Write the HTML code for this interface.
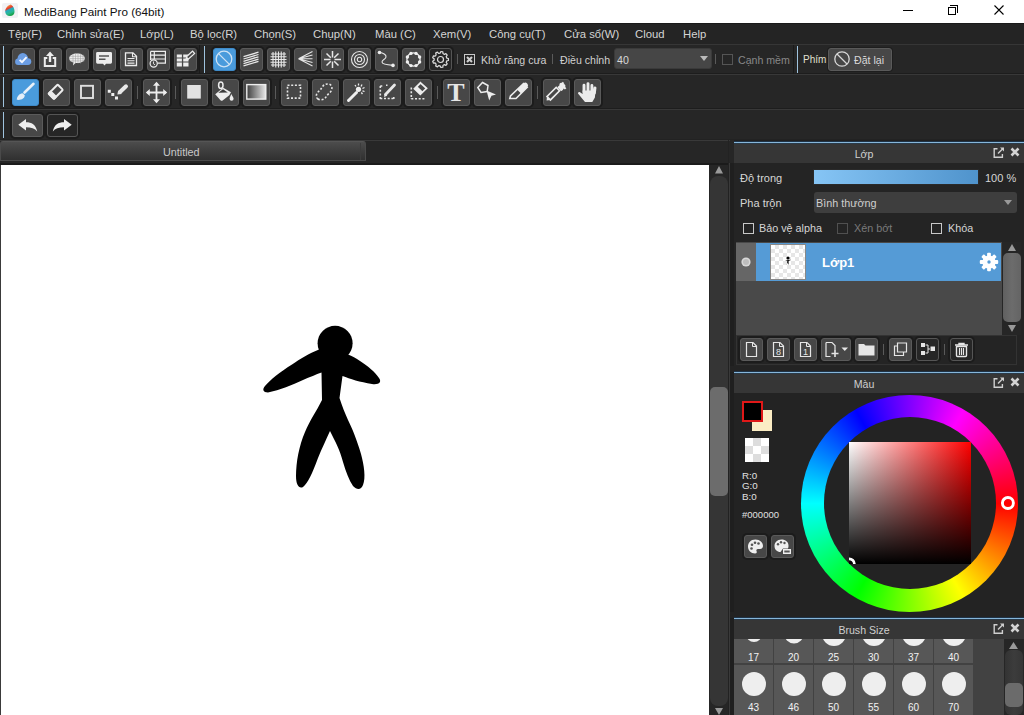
<!DOCTYPE html>
<html><head><meta charset="utf-8"><style>
*{margin:0;padding:0;box-sizing:border-box}
html,body{width:1024px;height:715px;overflow:hidden;background:#232323;font-family:"Liberation Sans",sans-serif;position:relative}
.a{position:absolute}
.t{position:absolute;white-space:nowrap;line-height:1}
.btn{position:absolute;background:#474747;border:1px solid #5a5a5a;border-radius:3px;box-shadow:0 0 0 2px #1c1c1c}
.btn.sel{background:#4a9bdc;border-color:#3f8bc9}
.btn.dk{background:#262626;border:1px solid #555}
.sep{position:absolute;width:1px;background:#5a5a5a}
.hd{position:absolute;width:2px;background:#5f95c0}
svg{position:absolute;overflow:visible}
.mi{position:absolute;white-space:nowrap;line-height:1;color:#d4d4d4;font-size:11.3px;top:28.5px}
.lbl{position:absolute;white-space:nowrap;line-height:1;color:#d0d0d0;font-size:10.6px}
.cb{position:absolute;width:11px;height:11px;border:1px solid #c8c8c8}
</style></head><body>
<div class="a" style="left:0px;top:0px;width:1024px;height:23px;background:#fff"></div>
<div class="a" style="left:2px;top:3px;width:16px;height:15px;background:#f1f1f4;border-radius:2px"></div>
<svg style="left:0;top:0" width="20" height="20" viewBox="0 0 20 20"><defs><linearGradient id="lg1" x1="0.3" y1="0" x2="0.7" y2="1"><stop offset="0" stop-color="#f5b048"/><stop offset="0.3" stop-color="#e8382a"/><stop offset="0.42" stop-color="#26a8c0"/><stop offset="0.7" stop-color="#28b890"/><stop offset="1" stop-color="#109830"/></linearGradient></defs><path d="M10.8 4.6C13.6 6 14.7 9.5 14.5 12C14.3 14.6 12.5 16 10 16C7 16 5.2 14 5.2 11.5C5.2 8.5 7.5 5.5 10.8 4.6Z" fill="url(#lg1)"/></svg>
<div class="t" style="left:24px;top:5.8px;font-size:11.7px;color:#111;">MediBang Paint Pro (64bit)</div>
<div class="a" style="left:903px;top:10px;width:10px;height:1px;background:#000"></div>
<div class="a" style="left:948px;top:7px;width:8px;height:8px;border:1px solid #000"></div>
<div class="a" style="left:950px;top:5px;width:8px;height:8px;border-top:1px solid #000;border-right:1px solid #000"></div>
<svg style="left:994px;top:5px" width="10" height="10"><path d="M0.5 0.5L9.5 9.5M9.5 0.5L0.5 9.5" stroke="#000" stroke-width="1.1"/></svg>
<div class="a" style="left:0px;top:23px;width:1024px;height:21px;background:#242424"></div>
<div class="a" style="left:0px;top:23px;width:1024px;height:1px;background:#1a1a1a"></div>
<div class="mi" style="left:8px">Tệp(F)</div>
<div class="mi" style="left:57px">Chỉnh sửa(E)</div>
<div class="mi" style="left:140px">Lớp(L)</div>
<div class="mi" style="left:190px">Bộ lọc(R)</div>
<div class="mi" style="left:254px">Chọn(S)</div>
<div class="mi" style="left:313px">Chụp(N)</div>
<div class="mi" style="left:375px">Màu (C)</div>
<div class="mi" style="left:433px">Xem(V)</div>
<div class="mi" style="left:489px">Công cụ(T)</div>
<div class="mi" style="left:564px">Cửa sổ(W)</div>
<div class="mi" style="left:635px">Cloud</div>
<div class="mi" style="left:683px">Help</div>
<div class="a" style="left:0px;top:44px;width:1024px;height:96px;background:#262626"></div>
<div class="a" style="left:0px;top:44px;width:1024px;height:1px;background:#363636"></div>
<div class="a" style="left:0px;top:73px;width:1024px;height:1px;background:#1d1d1d"></div>
<div class="a" style="left:0px;top:74px;width:1024px;height:1px;background:#383838"></div>
<div class="a" style="left:0px;top:108px;width:1024px;height:1px;background:#1d1d1d"></div>
<div class="a" style="left:0px;top:109px;width:1024px;height:1px;background:#383838"></div>
<div class="a" style="left:0px;top:139px;width:1024px;height:1px;background:#222"></div>
<div class="a" style="left:3px;top:46px;width:1px;height:27px;background:#9fc3de"></div>
<div class="a" style="left:3px;top:77px;width:1px;height:30px;background:#9fc3de"></div>
<div class="a" style="left:3px;top:112px;width:1px;height:26px;background:#9fc3de"></div>
<div class="a" style="left:204px;top:46px;width:1px;height:27px;background:#9fc3de"></div>
<div class="a" style="left:797px;top:46px;width:1px;height:27px;background:#9fc3de"></div>
<div class="a" style="left:199px;top:45px;width:1px;height:29px;background:#1a1a1a"></div>
<div class="a" style="left:793px;top:45px;width:1px;height:29px;background:#1a1a1a"></div>
<div class="btn " style="left:12px;top:48px;width:23px;height:23px"></div>
<svg style="left:12px;top:48px" width="23" height="23" viewBox="0 0 23 23"><circle cx="6.3" cy="13.8" r="3.2" fill="#6b9de3"/><circle cx="10.8" cy="10.4" r="5.3" fill="#6b9de3"/><circle cx="15.9" cy="13.6" r="3.4" fill="#6b9de3"/><rect x="6.3" y="12" width="9.6" height="5" fill="#6b9de3"/><path d="M7.6 11.8L10 14.2L14.6 9.2" fill="none" stroke="#f4f8ff" stroke-width="1.9" /></svg>
<div class="btn " style="left:39px;top:48px;width:23px;height:23px"></div>
<svg style="left:39px;top:48px" width="23" height="23" viewBox="0 0 23 23"><path d="M8.3 10H5.8V18H16.2V10H13.7" fill="none" stroke="#ededed" stroke-width="2" /><path d="M11 3.5L15 8H12.2V14H9.8V8H7Z" fill="#ededed"/></svg>
<div class="btn " style="left:66px;top:48px;width:23px;height:23px"></div>
<svg style="left:66px;top:48px" width="23" height="23" viewBox="0 0 23 23"><path d="M11 5.5C15.4 5.5 18.8 7.6 18.8 10.3C18.8 13 15.4 15.1 11 15.1C10.4 15.1 9.9 15.1 9.4 15L7 17.6L7.4 14.6C4.8 13.9 3.2 12.3 3.2 10.3C3.2 7.6 6.6 5.5 11 5.5Z" fill="#ededed"/><path d="M7 6V15M9.5 5.5V15.5M12 5.5V15.5M14.5 5.5V15.5M17 6.5V14M3.5 8.3H18.5M3.5 10.6H18.5M3.5 12.9H18.5" fill="none" stroke="#9a9a9a" stroke-width="0.5" /></svg>
<div class="btn " style="left:93px;top:48px;width:23px;height:23px"></div>
<svg style="left:93px;top:48px" width="23" height="23" viewBox="0 0 23 23"><path d="M4.5 3.9H17.6A1.4 1.4 0 0 1 19 5.3V14.3A1.4 1.4 0 0 1 17.6 15.7H13L11.5 17.6L10 15.7H4.5A1.4 1.4 0 0 1 3.1 14.3V5.3A1.4 1.4 0 0 1 4.5 3.9Z" fill="#ededed"/><path d="M6 8H16M6 11.3H12.5" fill="none" stroke="#555" stroke-width="1.4" /></svg>
<div class="btn " style="left:120px;top:48px;width:23px;height:23px"></div>
<svg style="left:120px;top:48px" width="23" height="23" viewBox="0 0 23 23"><path d="M5.5 4.8H13L16.5 8.3V17.5H5.5Z" fill="none" stroke="#ededed" stroke-width="1.3" /><path d="M12.5 4.8V8.8H16.5" fill="none" stroke="#ededed" stroke-width="1.1" /><path d="M7.5 10.5H14.5M7.5 12.8H14.5M7.5 15.1H14.5" fill="none" stroke="#ededed" stroke-width="1.1" /></svg>
<div class="btn " style="left:147px;top:48px;width:23px;height:23px"></div>
<svg style="left:147px;top:48px" width="23" height="23" viewBox="0 0 23 23"><path d="M3.6 3.4H18.4V15.2H10.5M3.6 3.4V12 M3.6 7.1H18.4M3.6 11H18.4M7.3 3.4V11" fill="none" stroke="#ededed" stroke-width="1.2" /><circle cx="6.7" cy="15.5" r="3.6" fill="#4b4b4b" stroke="#ededed" stroke-width="1.2"/><path d="M6.5 13.5V15.8L8 16.8" fill="none" stroke="#ededed" stroke-width="0.9" /></svg>
<div class="btn " style="left:174px;top:48px;width:23px;height:23px"></div>
<svg style="left:174px;top:48px" width="23" height="23" viewBox="0 0 23 23"><path d="M2.8 6.6H7.9V9.6H2.8ZM9.2 6.6H14.5V9.6H9.2ZM2.8 10.6H7.9V13.6H2.8ZM9.2 10.6H14.5V13.6H9.2ZM2.8 14.6H7.9V18.4H2.8ZM9.2 14.6H14.5V18.4H9.2Z" fill="#ededed"/><g transform="rotate(-42 15.5 8)"><rect x="12.5" y="6.5" width="8.5" height="3" fill="#474747" stroke="#ededed" stroke-width="1.2"/><path d="M12.5 6.5L9.5 8L12.5 9.5Z" fill="#ededed"/></g></svg>
<div class="btn sel" style="left:213px;top:48px;width:23px;height:23px"></div>
<svg style="left:213px;top:48px" width="23" height="23" viewBox="0 0 23 23"><circle cx="11" cy="11" r="7.8" fill="none" stroke="#cfe3f5" stroke-width="1.3"/><path d="M5.6 5.6L16.4 16.4" fill="none" stroke="#cfe3f5" stroke-width="1.3" /></svg>
<div class="btn " style="left:240px;top:48px;width:23px;height:23px"></div>
<svg style="left:240px;top:48px" width="23" height="23" viewBox="0 0 23 23"><path d="M3.5 8.7L18.5 4.2M3.5 11L18.5 6.5M3.5 13.3L18.5 8.8M3.5 15.6L18.5 11.1M3.5 17.9L18.5 13.4" fill="none" stroke="#e6e6e6" stroke-width="1.3" /></svg>
<div class="btn " style="left:267px;top:48px;width:23px;height:23px"></div>
<svg style="left:267px;top:48px" width="23" height="23" viewBox="0 0 23 23"><path d="M6 4V19M8.75 3.5V19.5M11.5 3.5V19.5M14.25 3.5V19.5M17 4V19M4 6H19M3.5 8.75H19.5M3.5 11.5H19.5M3.5 14.25H19.5M4 17H19" fill="none" stroke="#e8e8e8" stroke-width="1.1" /></svg>
<div class="btn " style="left:294px;top:48px;width:23px;height:23px"></div>
<svg style="left:294px;top:48px" width="23" height="23" viewBox="0 0 23 23"><path d="M4.5 10.8L18.5 3.5M4.5 10.8L18.5 7M4.5 10.8L18.5 10.8M4.5 10.8L18.5 14.5M4.5 10.8L18.5 18" fill="none" stroke="#e6e6e6" stroke-width="1.1" /></svg>
<div class="btn " style="left:321px;top:48px;width:23px;height:23px"></div>
<svg style="left:321px;top:48px" width="23" height="23" viewBox="0 0 23 23"><path d="M11.5 3V9.5M11.5 13.5V20M3 11.5H9.5M13.5 11.5H20M5.5 5.5L9.8 9.8M13.2 13.2L17.5 17.5M17.5 5.5L13.2 9.8M9.8 13.2L5.5 17.5" fill="none" stroke="#e6e6e6" stroke-width="1.5" /></svg>
<div class="btn " style="left:348px;top:48px;width:23px;height:23px"></div>
<svg style="left:348px;top:48px" width="23" height="23" viewBox="0 0 23 23"><circle cx="11.5" cy="11.5" r="8" fill="none" stroke="#e6e6e6" stroke-width="1.1"/><circle cx="11.5" cy="11.5" r="5" fill="none" stroke="#e6e6e6" stroke-width="1.1"/><circle cx="11.5" cy="11.5" r="2.2" fill="none" stroke="#e6e6e6" stroke-width="1.1"/></svg>
<div class="btn " style="left:375px;top:48px;width:23px;height:23px"></div>
<svg style="left:375px;top:48px" width="23" height="23" viewBox="0 0 23 23"><path d="M4.5 4.5C8 5 11.5 6.5 11 9C10.5 11.5 7 11.5 7 14C7 16.5 13 17 18 17.4" fill="none" stroke="#e6e6e6" stroke-width="1.1" /><circle cx="4.5" cy="4.5" r="1.8" fill="#eee"/><circle cx="18" cy="17.4" r="1.8" fill="#eee"/></svg>
<div class="btn " style="left:402px;top:48px;width:23px;height:23px"></div>
<svg style="left:402px;top:48px" width="23" height="23" viewBox="0 0 23 23"><circle cx="11.5" cy="11.5" r="6.6" fill="none" stroke="#e6e6e6" stroke-width="1.3"/><circle cx="17.60" cy="14.01" r="1.7" fill="#f0f0f0"/><circle cx="14.04" cy="17.59" r="1.7" fill="#f0f0f0"/><circle cx="8.99" cy="17.60" r="1.7" fill="#f0f0f0"/><circle cx="5.41" cy="14.04" r="1.7" fill="#f0f0f0"/><circle cx="5.40" cy="8.99" r="1.7" fill="#f0f0f0"/><circle cx="8.96" cy="5.41" r="1.7" fill="#f0f0f0"/><circle cx="14.01" cy="5.40" r="1.7" fill="#f0f0f0"/><circle cx="17.59" cy="8.96" r="1.7" fill="#f0f0f0"/></svg>
<div class="btn dk" style="left:429px;top:48px;width:23px;height:23px"></div>
<svg style="left:429px;top:48px" width="23" height="23" viewBox="0 0 23 23"><path d="M19.44 10.50 L19.44 12.50 L17.74 12.92 L17.19 14.43 L18.22 15.83 L16.94 17.37 L15.37 16.60 L13.98 17.40 L13.87 19.14 L11.89 19.49 L11.19 17.89 L9.61 17.61 L8.40 18.87 L6.66 17.87 L7.15 16.20 L6.12 14.97 L4.38 15.16 L3.70 13.27 L5.15 12.30 L5.15 10.70 L3.70 9.73 L4.38 7.84 L6.12 8.03 L7.15 6.80 L6.66 5.13 L8.40 4.13 L9.61 5.39 L11.19 5.11 L11.89 3.51 L13.87 3.86 L13.98 5.60 L15.37 6.40 L16.94 5.63 L18.22 7.17 L17.19 8.57 L17.74 10.08Z" fill="none" stroke="#dcdcdc" stroke-width="1.2" stroke-linejoin="round"/><circle cx="11.5" cy="11.5" r="3" fill="none" stroke="#dcdcdc" stroke-width="1.2"/></svg>
<div class="sep" style="left:457px;top:54px;height:10px"></div>
<div class="cb" style="left:464px;top:54px"></div>
<svg style="left:464px;top:54px" width="11" height="11"><path d="M3 3L8 8M8 3L3 8" stroke="#cfcfcf" stroke-width="2.1"/></svg>
<div class="t" style="left:481px;top:55px;font-size:10.6px;color:#d0d0d0;">Khử răng cưa</div>
<div class="sep" style="left:552px;top:54px;height:10px"></div>
<div class="t" style="left:560px;top:55px;font-size:10.6px;color:#d0d0d0;">Điều chỉnh</div>
<div class="a" style="left:614px;top:48px;width:98px;height:21px;background:#464646;border-radius:3px;border:1px solid #3a3a3a"></div>
<div class="t" style="left:617px;top:55px;font-size:10.6px;color:#d8d8d8;">40</div>
<svg style="left:700px;top:56px" width="8" height="5"><path d="M0 0H8L4 5Z" fill="#bbb"/></svg>
<div class="sep" style="left:715px;top:54px;height:10px"></div>
<div class="cb" style="left:722px;top:54px;border-color:#555"></div>
<div class="t" style="left:738px;top:55px;font-size:10.6px;color:#888;">Cạnh mềm</div>
<div class="t" style="left:803px;top:55px;font-size:10px;color:#e0e0d0;">Phím</div>
<div class="a" style="left:828px;top:48px;width:64px;height:23px;background:#474747;border-radius:3px;border:1px solid #5a5a5a;box-shadow:0 0 0 1px #1e1e1e"></div>
<svg style="left:834px;top:51px" width="16" height="16"><circle cx="8" cy="8" r="7.2" fill="none" stroke="#d8d8d8" stroke-width="1.3"/><path d="M3 3L13 13" stroke="#d8d8d8" stroke-width="1.3"/></svg>
<div class="t" style="left:854px;top:55px;font-size:10.6px;color:#d8d8d8;">Đặt lại</div>
<div class="btn sel" style="left:12px;top:79px;width:27px;height:27px"></div>
<svg style="left:12px;top:79px" width="27" height="27" viewBox="0 0 27 27"><path d="M12.5 13.5L21.5 4.8" fill="none" stroke="#eaf2fa" stroke-width="2.6" stroke-linecap="round"/><path d="M4.8 20.8C4.6 17.5 7.5 14.5 10.5 14.2L12.8 16.3C12.6 19.5 9.5 21.3 4.8 20.8Z" fill="#e4eef8"/></svg>
<div class="btn " style="left:43px;top:79px;width:27px;height:27px"></div>
<svg style="left:43px;top:79px" width="27" height="27" viewBox="0 0 27 27"><g transform="rotate(-45 12.8 12.7)"><rect x="6.4" y="8.95" width="12.8" height="7.5" rx="1" fill="none" stroke="#ececec" stroke-width="2"/><rect x="5.4" y="7.95" width="5" height="9.5" rx="1.2" fill="#ececec"/></g></svg>
<div class="btn " style="left:74px;top:79px;width:27px;height:27px"></div>
<svg style="left:74px;top:79px" width="27" height="27" viewBox="0 0 27 27"><rect x="7" y="6.8" width="12" height="12.2" fill="none" stroke="#e0e0e0" stroke-width="1.9"/></svg>
<div class="btn " style="left:105px;top:79px;width:27px;height:27px"></div>
<svg style="left:105px;top:79px" width="27" height="27" viewBox="0 0 27 27"><path d="M2.8 10.8H5.8V13.8H2.8ZM6.3 14.1H9.3V17.1H6.3ZM10 17.5H13V20.5H10Z" fill="#f0f0f0"/><path d="M15 13L21 7.3" fill="none" stroke="#e8e8e8" stroke-width="4" stroke-linecap="round"/><path d="M12.3 15.5L13.2 11.5L16.8 15Z" fill="#e8e8e8"/></svg>
<div class="btn " style="left:143px;top:79px;width:27px;height:27px"></div>
<svg style="left:143px;top:79px" width="27" height="27" viewBox="0 0 27 27"><path d="M13.5 4V23M4 13.5H23" fill="none" stroke="#ededed" stroke-width="1.8" /><path d="M13.5 2.8L17 6.8H10ZM13.5 24.2L17 20.2H10ZM2.8 13.5L6.8 10V17ZM24.2 13.5L20.2 10V17Z" fill="#ededed"/></svg>
<div class="btn " style="left:181px;top:79px;width:27px;height:27px"></div>
<svg style="left:181px;top:79px" width="27" height="27" viewBox="0 0 27 27"><rect x="6.2" y="6" width="13.6" height="13.6" fill="#e2e2e2"/></svg>
<div class="btn " style="left:212px;top:79px;width:27px;height:27px"></div>
<svg style="left:212px;top:79px" width="27" height="27" viewBox="0 0 27 27"><ellipse cx="8.8" cy="6.3" rx="2.2" ry="3.2" fill="none" stroke="#ececec" stroke-width="1.5"/><path d="M3.2 15.3L11.2 8.8L19 13.2L17.3 16.2L10.6 21.6C9.8 22 9 21.8 8.5 21.2Z" fill="#ededed"/><path d="M6.3 13.8L11 10.3L15.8 13.5Z" fill="#3a3a3a"/><path d="M19.3 15C20.3 17 21.6 18.5 21.6 19.8A2 2 0 0 1 17.6 19.8C17.6 18.5 18.5 17 19.3 15Z" fill="#ededed"/></svg>
<div class="btn " style="left:243px;top:79px;width:27px;height:27px"></div>
<svg style="left:243px;top:79px" width="27" height="27" viewBox="0 0 27 27"><defs><linearGradient id="gr1"><stop offset="0" stop-color="#3e3e3e"/><stop offset="1" stop-color="#e8e8e8"/></linearGradient></defs><rect x="3.8" y="5.6" width="19" height="14.5" fill="url(#gr1)" stroke="#eee" stroke-width="1.4"/></svg>
<div class="btn " style="left:281px;top:79px;width:27px;height:27px"></div>
<svg style="left:281px;top:79px" width="27" height="27" viewBox="0 0 27 27"><rect x="6.5" y="6.3" width="13" height="12.8" fill="none" stroke="#e6e6e6" stroke-width="1.6" stroke-dasharray="2 1.7"/></svg>
<div class="btn " style="left:312px;top:79px;width:27px;height:27px"></div>
<svg style="left:312px;top:79px" width="27" height="27" viewBox="0 0 27 27"><path d="M6 20C3.5 18.5 4 14.5 6.5 12.5C8.5 11 9.5 9 11 7C13 4.5 17.5 4.2 19.2 6.5C20.8 8.8 19.5 12.5 17 14.5C14.5 16.5 14 19 11.5 20.2C9.5 21 7.5 21 6 20Z" fill="none" stroke="#e6e6e6" stroke-width="1.6" stroke-dasharray="2 1.8"/></svg>
<div class="btn " style="left:343px;top:79px;width:27px;height:27px"></div>
<svg style="left:343px;top:79px" width="27" height="27" viewBox="0 0 27 27"><path d="M5.5 21.5L13.5 13.5" fill="none" stroke="#eee" stroke-width="3" stroke-linecap="round"/><circle cx="15.5" cy="10.3" r="2.6" fill="#eee"/><path d="M15.5 4.5V6.5M19 5.5L18 7.5M21.5 8.5L19.5 9.5M21.5 12.5L19.5 11.8M12 6L13 7.5M19.5 15L18.3 13.5" fill="none" stroke="#ededed" stroke-width="1.3" /></svg>
<div class="btn " style="left:374px;top:79px;width:27px;height:27px"></div>
<svg style="left:374px;top:79px" width="27" height="27" viewBox="0 0 27 27"><path d="M6.3 7H9.5M12 6.3H13.5M6.3 7V20M6.3 19.5H20M19.8 20V17" fill="none" stroke="#e6e6e6" stroke-width="1.6" stroke-dasharray="2 1.7"/><path d="M11.5 15.5L20.5 6" fill="none" stroke="#e8e8e8" stroke-width="2.8" stroke-linecap="round"/><path d="M10 18L10.8 14.6L13.3 16.8Z" fill="#ededed"/></svg>
<div class="btn " style="left:405px;top:79px;width:27px;height:27px"></div>
<svg style="left:405px;top:79px" width="27" height="27" viewBox="0 0 27 27"><path d="M6.3 8.5V20M6.3 19.8H20.5" fill="none" stroke="#e6e6e6" stroke-width="1.6" stroke-dasharray="2 1.7"/><path d="M15.5 3.8L21.5 9.3L15.3 15.3L9.5 9.8Z" fill="none" stroke="#ededed" stroke-width="1.8" /><path d="M9.5 9.8L12.2 7.2L18 12.8L15.3 15.3Z" fill="#ededed"/></svg>
<div class="btn " style="left:443px;top:79px;width:27px;height:27px"></div>
<svg style="left:443px;top:79px" width="27" height="27" viewBox="0 0 27 27"><text x="13" y="21.8" text-anchor="middle" font-family="Liberation Serif" font-weight="bold" font-size="26" fill="#e6e6e6">T</text></svg>
<div class="btn " style="left:474px;top:79px;width:27px;height:27px"></div>
<svg style="left:474px;top:79px" width="27" height="27" viewBox="0 0 27 27"><path d="M8.5 3.5L14 6.5L13.2 12.5L7 13.5L3.8 8.5Z" fill="none" stroke="#ededed" stroke-width="1.5" /><path d="M12.5 11.5L22 15.5L17.5 16.8L15.2 21.5Z" fill="#ededed"/></svg>
<div class="btn " style="left:505px;top:79px;width:27px;height:27px"></div>
<svg style="left:505px;top:79px" width="27" height="27" viewBox="0 0 27 27"><path d="M18.5 4.5L22.2 8.2L11 19.5H4.8L5.5 17Z" fill="none" stroke="#ededed" stroke-width="1.6" /><path d="M18.5 4.5A2.6 2.6 0 0 1 22.2 8.2L16 14.5L12.3 10.8Z" fill="#ededed"/></svg>
<div class="btn " style="left:543px;top:79px;width:27px;height:27px"></div>
<svg style="left:543px;top:79px" width="27" height="27" viewBox="0 0 27 27"><g transform="rotate(-45 11 14)"><rect x="3.5" y="11.6" width="13" height="4.8" fill="none" stroke="#ececec" stroke-width="1.6"/><path d="M3.5 11.6L0.5 14L3.5 16.4Z" fill="#ececec"/></g><path d="M14.3 8.3L16.5 6.3C16 4.8 17.3 3.3 18.8 3.8L19.8 2.8L21.3 4.3L20.5 5.1C22 5.3 23 6.6 22.2 8L23.4 9.2L21.9 10.6L20.6 9.6C20.3 11 19 12.5 17.7 11.7Z" fill="#ededed"/></svg>
<div class="btn " style="left:574px;top:79px;width:27px;height:27px"></div>
<svg style="left:574px;top:79px" width="27" height="27" viewBox="0 0 27 27"><path d="M10 6.3V13M14 4.6V13M17.9 6.4V13M21 8.9L20.4 14" fill="none" stroke="#ececec" stroke-width="2.9" stroke-linecap="round"/><path d="M8.6 11.5H21.5L20.9 18.5L18.3 23H11L8.5 20L4.2 14.8C3.5 13.8 4.8 12.6 6 13.2L8.6 15Z" fill="#ececec"/></svg>
<div class="sep" style="left:137px;top:86px;height:13px"></div>
<div class="sep" style="left:175px;top:86px;height:13px"></div>
<div class="sep" style="left:275px;top:86px;height:13px"></div>
<div class="sep" style="left:437px;top:86px;height:13px"></div>
<div class="sep" style="left:537px;top:86px;height:13px"></div>
<div class="btn " style="left:12px;top:114px;width:31px;height:23px"></div>
<svg style="left:12px;top:114px" width="31" height="23" viewBox="0 0 31 23"><path d="M6.3 10.8L14 5V8.2C19.5 8.2 24 10.5 25.2 17.5C23 14.5 19 13.2 14 13.2V16.5Z" fill="#eeeeee"/></svg>
<div class="btn dk" style="left:47px;top:114px;width:31px;height:23px"></div>
<svg style="left:47px;top:114px" width="31" height="23" viewBox="0 0 31 23"><path d="M24.7 10.8L17 5V8.2C11.5 8.2 7 10.5 5.8 17.5C8 14.5 12 13.2 17 13.2V16.5Z" fill="#eeeeee"/></svg>
<div class="a" style="left:0px;top:140px;width:730px;height:25px;background:#262626"></div>
<div class="a" style="left:0px;top:140px;width:730px;height:1px;background:#393939"></div>
<div class="a" style="left:0px;top:141px;width:366px;height:20px;background:linear-gradient(#4c4c4c,#303030);border:1px solid #4a4a4a;border-top-color:#555;border-radius:3px 3px 0 0"></div>
<div class="a" style="left:360px;top:143px;width:1px;height:17px;background:#3c3c3c"></div>
<div class="t" style="left:163px;top:147px;font-size:10.8px;color:#c8c8c8;">Untitled</div>
<div class="a" style="left:0px;top:163px;width:730px;height:2px;background:#1b1b1b"></div>
<div class="a" style="left:0px;top:165px;width:709px;height:550px;background:#3a3a3a"></div>
<div class="a" style="left:1px;top:165px;width:708px;height:550px;background:#fff"></div>
<svg style="left:0;top:0" width="709" height="715" viewBox="0 0 709 715">
<circle cx="335.1" cy="343.3" r="17.5" fill="#000"/>
<path d="M319 349.5 C310 353 300 359 292 364.5 C280 372 270 380 265 386 C262 389.5 263 392.5 268 392.5 C280 390 292 385 303 380 C310 377 316 374.5 321.5 372.5 L322 400
C316 412 310 420 305 432 C299 446 296 462 296 476 C296 485 299 489 303 487 C308 483 312 474 318 458 C322 448 326 440 330 431
C335 441 340 450 343 462 C346 472 349 480 353 486 C357 490 361 490 363 485 C366 478 364 465 361 454 C357 440 352 428 348 420 C345 413 342 406 339.5 398
L342.5 376 C350 379 360 382 372 384 C379 385 382 382 379 378 C375 372 368 366 360 361 C356 358 352 356 348 354.5 Z" fill="#000"/>
</svg>
<div class="a" style="left:709px;top:165px;width:21px;height:550px;background:#262626"></div>
<svg style="left:715px;top:166px" width="8" height="8"><path d="M4 0L8 7.5H0Z" fill="#9a9a9a"/></svg>
<div class="a" style="left:710px;top:176px;width:18px;height:530px;background:#353535;border-radius:8px"></div>
<div class="a" style="left:710px;top:387px;width:18px;height:109px;background:#6c6c6c;border-radius:5px"></div>
<svg style="left:715px;top:708px" width="8" height="8"><path d="M4 7L8 0H0Z" fill="#9a9a9a"/></svg>
<div class="a" style="left:728px;top:140px;width:1px;height:575px;background:#222"></div>
<div class="a" style="left:729px;top:163px;width:1px;height:552px;background:#3a3a3a"></div>
<div class="a" style="left:730px;top:140px;width:294px;height:575px;background:#1f1f1f"></div>
<div class="a" style="left:730px;top:140px;width:4px;height:23px;background:#262626"></div>
<div class="a" style="left:734px;top:141px;width:290px;height:1px;background:#1f3347"></div>
<div class="a" style="left:734px;top:142px;width:290px;height:1px;background:#86b6da"></div>
<div class="a" style="left:734px;top:143px;width:290px;height:1px;background:#2a3a48"></div>
<div class="a" style="left:734px;top:144px;width:290px;height:19px;background:#363636"></div>
<div class="t" style="left:764px;width:200px;text-align:center;top:149px;font-size:10.6px;color:#cfcfcf">Lớp</div>
<svg style="left:993px;top:147px" width="12" height="12"><path d="M4.5 1.8H1.2V10.2H9.4V7" fill="none" stroke="#cfcfcf" stroke-width="1.4"/><path d="M7 0.5H11V4.5Z" fill="#cfcfcf"/><path d="M10 1.5L5 6.5" stroke="#cfcfcf" stroke-width="1.4"/></svg>
<svg style="left:1010px;top:147px" width="10" height="10"><path d="M1.5 1.5L8.5 8.5M8.5 1.5L1.5 8.5" stroke="#d4d4d4" stroke-width="2.6"/></svg>
<div class="a" style="left:734px;top:163px;width:290px;height:209px;background:#242424"></div>
<div class="t" style="left:740px;top:173px;font-size:11px;color:#d6d6d6;">Độ trong</div>
<div class="a" style="left:813px;top:169px;width:166px;height:16px;background:linear-gradient(90deg,#86c5f5,#4f93cc);border:1px solid #2a2a2a"></div>
<div class="t" style="left:985px;top:173px;font-size:11px;color:#d6d6d6;">100 %</div>
<div class="t" style="left:740px;top:198px;font-size:11px;color:#d6d6d6;">Pha trộn</div>
<div class="a" style="left:814px;top:192px;width:203px;height:21px;background:#3e3e3e;border-radius:3px"></div>
<div class="t" style="left:816px;top:198px;font-size:10.8px;color:#cfcfcf;">Bình thường</div>
<svg style="left:1004px;top:200px" width="8" height="5"><path d="M0 0H8L4 5Z" fill="#999"/></svg>
<div class="cb" style="left:743px;top:223px"></div>
<div class="t" style="left:759px;top:223px;font-size:10.8px;color:#d6d6d6;">Bảo vệ alpha</div>
<div class="cb" style="left:837px;top:223px;border-color:#505050"></div>
<div class="t" style="left:854px;top:223px;font-size:10.8px;color:#7a7a7a;">Xén bớt</div>
<div class="cb" style="left:931px;top:223px"></div>
<div class="t" style="left:948px;top:223px;font-size:10.8px;color:#d6d6d6;">Khóa</div>
<div class="a" style="left:736px;top:242px;width:266px;height:93px;background:#494949"></div>
<div class="a" style="left:736px;top:243px;width:20px;height:38px;background:#666"></div>
<svg style="left:740px;top:256px" width="12" height="12"><circle cx="6" cy="6" r="4.6" fill="#d8d8d8"/><circle cx="6" cy="6" r="3" fill="#bdbdbd"/></svg>
<div class="a" style="left:756px;top:243px;width:245px;height:38px;background:#559bd6"></div>
<div class="a" style="left:770px;top:244px;width:36px;height:36px;background-color:#fff;background-image:linear-gradient(45deg,#e6e6e6 25%,transparent 25%,transparent 75%,#e6e6e6 75%),linear-gradient(45deg,#e6e6e6 25%,transparent 25%,transparent 75%,#e6e6e6 75%);background-size:8px 8px;background-position:0 0,4px 4px;border:1px solid #888"></div>
<svg style="left:784px;top:256px" width="8" height="10"><circle cx="4" cy="2" r="1.6" fill="#000"/><path d="M1 4.5L7 3.8L4.6 5V9L3.5 6.5L2.8 9L3.3 5Z" fill="#000"/></svg>
<div class="t" style="left:822px;top:256px;font-size:13px;color:#fff;font-weight:bold">Lớp1</div>
<svg style="left:979px;top:252px" width="20" height="20"><circle cx="10" cy="10" r="6.6" fill="#fff"/><rect x="8.1" y="0.8" width="3.8" height="5" rx="1" fill="#fff" transform="rotate(0 10 10)"/><rect x="8.1" y="0.8" width="3.8" height="5" rx="1" fill="#fff" transform="rotate(45 10 10)"/><rect x="8.1" y="0.8" width="3.8" height="5" rx="1" fill="#fff" transform="rotate(90 10 10)"/><rect x="8.1" y="0.8" width="3.8" height="5" rx="1" fill="#fff" transform="rotate(135 10 10)"/><rect x="8.1" y="0.8" width="3.8" height="5" rx="1" fill="#fff" transform="rotate(180 10 10)"/><rect x="8.1" y="0.8" width="3.8" height="5" rx="1" fill="#fff" transform="rotate(225 10 10)"/><rect x="8.1" y="0.8" width="3.8" height="5" rx="1" fill="#fff" transform="rotate(270 10 10)"/><rect x="8.1" y="0.8" width="3.8" height="5" rx="1" fill="#fff" transform="rotate(315 10 10)"/><circle cx="10" cy="10" r="1.7" fill="#559bd6"/></svg>
<div class="a" style="left:1002px;top:242px;width:19px;height:93px;background:#262626"></div>
<svg style="left:1008px;top:244px" width="8" height="7"><path d="M4 0L8 7H0Z" fill="#999"/></svg>
<div class="a" style="left:1003px;top:253px;width:18px;height:69px;background:linear-gradient(90deg,#606060,#6c6c6c 50%,#646464);border-radius:5px"></div>
<svg style="left:1008px;top:325px" width="8" height="7"><path d="M4 7L8 0H0Z" fill="#999"/></svg>
<div class="a" style="left:736px;top:335px;width:281px;height:30px;border:1px solid #333"></div>
<div class="btn " style="left:740px;top:338px;width:23px;height:23px"></div>
<svg style="left:740px;top:338px" width="23" height="23"><path d="M6.5 4.5H13L16.5 8V18.5H6.5Z" fill="none" stroke="#e6e6e6" stroke-width="1.2"/><path d="M12.5 4.5V8.5H16.5" fill="none" stroke="#e6e6e6" stroke-width="1"/></svg>
<div class="btn " style="left:767px;top:338px;width:23px;height:23px"></div>
<svg style="left:767px;top:338px" width="23" height="23"><path d="M6.5 4.5H13L16.5 8V18.5H6.5Z" fill="none" stroke="#e6e6e6" stroke-width="1.2"/><path d="M12.5 4.5V8.5H16.5" fill="none" stroke="#e6e6e6" stroke-width="1"/><text x="11.5" y="16.5" text-anchor="middle" font-size="9" font-family="Liberation Sans" fill="#e6e6e6">8</text></svg>
<div class="btn " style="left:794px;top:338px;width:23px;height:23px"></div>
<svg style="left:794px;top:338px" width="23" height="23"><path d="M6.5 4.5H13L16.5 8V18.5H6.5Z" fill="none" stroke="#e6e6e6" stroke-width="1.2"/><path d="M12.5 4.5V8.5H16.5" fill="none" stroke="#e6e6e6" stroke-width="1"/><text x="11.5" y="16.5" text-anchor="middle" font-size="9" font-family="Liberation Sans" fill="#e6e6e6">1</text></svg>
<div class="btn " style="left:821px;top:338px;width:30px;height:23px"></div>
<svg style="left:821px;top:338px" width="30" height="23"><path d="M5 4.5H11L14 7.5V12M9.5 18.5H5V4.5" fill="none" stroke="#e6e6e6" stroke-width="1.2"/><path d="M14 12V19M10.5 15.5H17.5" fill="none" stroke="#e6e6e6" stroke-width="1.6"/><path d="M20.5 9.5H27L23.75 13Z" fill="#e6e6e6"/></svg>
<div class="btn " style="left:855px;top:338px;width:23px;height:23px"></div>
<svg style="left:855px;top:338px" width="23" height="23"><path d="M3.5 6H9L10.5 7.5H19.5V17.5H3.5Z" fill="#e6e6e6"/></svg>
<div class="sep" style="left:883px;top:344px;height:11px"></div>
<div class="btn " style="left:889px;top:338px;width:23px;height:23px"></div>
<svg style="left:889px;top:338px" width="23" height="23"><path d="M8.5 5H17.5V14H8.5Z" fill="none" stroke="#e6e6e6" stroke-width="1.2"/><path d="M8.5 8H5.5V17.5H14.5V14" fill="none" stroke="#e6e6e6" stroke-width="1.2"/></svg>
<div class="btn dk" style="left:916px;top:338px;width:23px;height:23px"></div>
<svg style="left:916px;top:338px" width="23" height="23"><path d="M5 5H9V9H5ZM5 13H9V17H5ZM14.5 8.5H19V13H14.5Z" fill="#e6e6e6"/><path d="M9.5 7H12V15H9.5M12 11H14" fill="none" stroke="#e6e6e6" stroke-width="1"/></svg>
<div class="sep" style="left:944px;top:344px;height:11px"></div>
<div class="btn dk" style="left:950px;top:338px;width:23px;height:23px"></div>
<svg style="left:950px;top:338px" width="23" height="23"><path d="M5 7H18M9 7V5.5H14V7" fill="none" stroke="#e6e6e6" stroke-width="1.4"/><path d="M6.5 8.5H16.5V17.5A1 1 0 0 1 15.5 18.5H7.5A1 1 0 0 1 6.5 17.5Z" fill="none" stroke="#e6e6e6" stroke-width="1.4"/><path d="M9.5 10V17M11.5 10V17M13.5 10V17" fill="none" stroke="#e6e6e6" stroke-width="1.2"/></svg>
<div class="a" style="left:730px;top:366px;width:294px;height:6px;background:#232323"></div>
<div class="a" style="left:734px;top:371px;width:290px;height:1px;background:#1f3347"></div>
<div class="a" style="left:734px;top:372px;width:290px;height:1px;background:#86b6da"></div>
<div class="a" style="left:734px;top:373px;width:290px;height:1px;background:#2a3a48"></div>
<div class="a" style="left:734px;top:374px;width:290px;height:19px;background:#363636"></div>
<div class="t" style="left:764px;width:200px;text-align:center;top:379px;font-size:10.6px;color:#cfcfcf">Màu</div>
<svg style="left:993px;top:377px" width="12" height="12"><path d="M4.5 1.8H1.2V10.2H9.4V7" fill="none" stroke="#cfcfcf" stroke-width="1.4"/><path d="M7 0.5H11V4.5Z" fill="#cfcfcf"/><path d="M10 1.5L5 6.5" stroke="#cfcfcf" stroke-width="1.4"/></svg>
<svg style="left:1010px;top:377px" width="10" height="10"><path d="M1.5 1.5L8.5 8.5M8.5 1.5L1.5 8.5" stroke="#d4d4d4" stroke-width="2.6"/></svg>
<div class="a" style="left:734px;top:393px;width:290px;height:225px;background:#232323"></div>
<div class="a" style="left:752px;top:410px;width:20px;height:21px;background:#fbedc4"></div>
<div class="a" style="left:742px;top:401px;width:21px;height:21px;background:#000;border:2px solid #e01818"></div>
<div class="a" style="left:745px;top:438px;width:24px;height:24px;background-color:#fff;background-image:linear-gradient(45deg,#ddd 25%,transparent 25%,transparent 75%,#ddd 75%),linear-gradient(45deg,#ddd 25%,transparent 25%,transparent 75%,#ddd 75%);background-size:16px 16px;background-position:0 0,8px 8px"></div>
<div class="t" style="left:742px;top:470.5px;font-size:9.8px;color:#e0e0e0;">R:0</div>
<div class="t" style="left:742px;top:481.25px;font-size:9.8px;color:#e0e0e0;">G:0</div>
<div class="t" style="left:742px;top:492.0px;font-size:9.8px;color:#e0e0e0;">B:0</div>
<div class="t" style="left:742px;top:510px;font-size:9.5px;color:#e0e0e0;">#000000</div>
<div class="btn" style="left:744px;top:535px;width:23px;height:23px"></div>
<div class="btn" style="left:771px;top:535px;width:23px;height:23px"></div>
<svg style="left:744px;top:535px" width="23" height="23"><path d="M11.5 4.5C6.5 4.5 4 8 4 11.5C4 15.5 7 18.5 11 18.5C13 18.5 13 17 12.5 16C12 15 12.5 14 14 14H16C18 14 19 12.5 19 11C19 7.5 16 4.5 11.5 4.5Z" fill="#eee"/><circle cx="8" cy="9.8" r="1.3" fill="#555"/><circle cx="11" cy="7.8" r="1.3" fill="#555"/><circle cx="14.5" cy="8.5" r="1.3" fill="#555"/><circle cx="7.5" cy="13.5" r="1.3" fill="#555"/></svg>
<svg style="left:771px;top:535px" width="23" height="23"><path d="M10.5 4.5C6 4.5 3.5 7.5 3.5 11C3.5 14.5 6 17 9.5 17L12 13.5H17C17.5 12.5 17.5 11.5 17.5 10.5C17.5 7 14.5 4.5 10.5 4.5Z" fill="#eee"/><circle cx="7" cy="9.3" r="1.2" fill="#555"/><circle cx="10" cy="7.3" r="1.2" fill="#555"/><circle cx="13.5" cy="8" r="1.2" fill="#555"/><rect x="12" y="14" width="8" height="5" fill="#eee"/><rect x="13.3" y="15.5" width="5.4" height="2" fill="#555"/></svg>
<div class="a" style="left:801px;top:395px;width:217px;height:217px;border-radius:50%;background:conic-gradient(from 90deg,#f00,#ff0,#0f0,#0ff,#00f,#f0f,#f00)"></div>
<div class="a" style="left:823.5px;top:417px;width:172px;height:172px;border-radius:50%;background:#232323"></div>
<div class="a" style="left:849px;top:442px;width:122px;height:122px;background:linear-gradient(rgba(0,0,0,0),#000),linear-gradient(90deg,#fff,#f00)"></div>
<svg style="left:1000px;top:495px" width="16" height="16"><circle cx="7.9" cy="8" r="5.5" fill="none" stroke="#fff" stroke-width="2.9"/></svg>
<svg style="left:843px;top:557px" width="14" height="14"><path d="M6 1.8A5.3 5.3 0 0 1 11.4 7.1" fill="none" stroke="#fff" stroke-width="2.7"/></svg>
<div class="a" style="left:730px;top:612px;width:294px;height:6px;background:#232323"></div>
<div class="a" style="left:734px;top:617px;width:290px;height:1px;background:#1f3347"></div>
<div class="a" style="left:734px;top:618px;width:290px;height:1px;background:#86b6da"></div>
<div class="a" style="left:734px;top:619px;width:290px;height:1px;background:#2a3a48"></div>
<div class="a" style="left:734px;top:620px;width:290px;height:19px;background:#363636"></div>
<div class="t" style="left:764px;width:200px;text-align:center;top:625px;font-size:10.6px;color:#cfcfcf">Brush Size</div>
<svg style="left:993px;top:623px" width="12" height="12"><path d="M4.5 1.8H1.2V10.2H9.4V7" fill="none" stroke="#cfcfcf" stroke-width="1.4"/><path d="M7 0.5H11V4.5Z" fill="#cfcfcf"/><path d="M10 1.5L5 6.5" stroke="#cfcfcf" stroke-width="1.4"/></svg>
<svg style="left:1010px;top:623px" width="10" height="10"><path d="M1.5 1.5L8.5 8.5M8.5 1.5L1.5 8.5" stroke="#d4d4d4" stroke-width="2.6"/></svg>
<div class="a" style="left:734px;top:639px;width:290px;height:76px;background:#232323"></div>
<div class="a" style="left:734px;top:639px;width:270px;height:76px;overflow:hidden;background:#424242">
<div class="a" style="left:0px;top:-24px;width:39px;height:48px;background:#575757"></div>
<div class="a" style="left:0px;top:26px;width:39px;height:52px;background:#575757"></div>
<svg style="left:0px;top:-24px" width="39" height="48"><circle cx="20" cy="19" r="8" fill="#eeeeee"/></svg>
<svg style="left:0px;top:26px" width="39" height="48"><circle cx="20" cy="19" r="12" fill="#eeeeee"/></svg>
<div class="t" style="left:0px;width:39px;text-align:center;top:14px;font-size:10px;color:#f2f2f2">17</div>
<div class="t" style="left:0px;width:39px;text-align:center;top:64px;font-size:10px;color:#f2f2f2">43</div>
<div class="a" style="left:40px;top:-24px;width:39px;height:48px;background:#575757"></div>
<div class="a" style="left:40px;top:26px;width:39px;height:52px;background:#575757"></div>
<svg style="left:40px;top:-24px" width="39" height="48"><circle cx="20" cy="19" r="9.5" fill="#eeeeee"/></svg>
<svg style="left:40px;top:26px" width="39" height="48"><circle cx="20" cy="19" r="12" fill="#eeeeee"/></svg>
<div class="t" style="left:40px;width:39px;text-align:center;top:14px;font-size:10px;color:#f2f2f2">20</div>
<div class="t" style="left:40px;width:39px;text-align:center;top:64px;font-size:10px;color:#f2f2f2">46</div>
<div class="a" style="left:80px;top:-24px;width:39px;height:48px;background:#575757"></div>
<div class="a" style="left:80px;top:26px;width:39px;height:52px;background:#575757"></div>
<svg style="left:80px;top:-24px" width="39" height="48"><circle cx="20" cy="19" r="12" fill="#eeeeee"/></svg>
<svg style="left:80px;top:26px" width="39" height="48"><circle cx="20" cy="19" r="12" fill="#eeeeee"/></svg>
<div class="t" style="left:80px;width:39px;text-align:center;top:14px;font-size:10px;color:#f2f2f2">25</div>
<div class="t" style="left:80px;width:39px;text-align:center;top:64px;font-size:10px;color:#f2f2f2">50</div>
<div class="a" style="left:120px;top:-24px;width:39px;height:48px;background:#575757"></div>
<div class="a" style="left:120px;top:26px;width:39px;height:52px;background:#575757"></div>
<svg style="left:120px;top:-24px" width="39" height="48"><circle cx="20" cy="19" r="12" fill="#eeeeee"/></svg>
<svg style="left:120px;top:26px" width="39" height="48"><circle cx="20" cy="19" r="12" fill="#eeeeee"/></svg>
<div class="t" style="left:120px;width:39px;text-align:center;top:14px;font-size:10px;color:#f2f2f2">30</div>
<div class="t" style="left:120px;width:39px;text-align:center;top:64px;font-size:10px;color:#f2f2f2">55</div>
<div class="a" style="left:160px;top:-24px;width:39px;height:48px;background:#575757"></div>
<div class="a" style="left:160px;top:26px;width:39px;height:52px;background:#575757"></div>
<svg style="left:160px;top:-24px" width="39" height="48"><circle cx="20" cy="19" r="12" fill="#eeeeee"/></svg>
<svg style="left:160px;top:26px" width="39" height="48"><circle cx="20" cy="19" r="12" fill="#eeeeee"/></svg>
<div class="t" style="left:160px;width:39px;text-align:center;top:14px;font-size:10px;color:#f2f2f2">37</div>
<div class="t" style="left:160px;width:39px;text-align:center;top:64px;font-size:10px;color:#f2f2f2">60</div>
<div class="a" style="left:200px;top:-24px;width:39px;height:48px;background:#575757"></div>
<div class="a" style="left:200px;top:26px;width:39px;height:52px;background:#575757"></div>
<svg style="left:200px;top:-24px" width="39" height="48"><circle cx="20" cy="19" r="12" fill="#eeeeee"/></svg>
<svg style="left:200px;top:26px" width="39" height="48"><circle cx="20" cy="19" r="12" fill="#eeeeee"/></svg>
<div class="t" style="left:200px;width:39px;text-align:center;top:14px;font-size:10px;color:#f2f2f2">40</div>
<div class="t" style="left:200px;width:39px;text-align:center;top:64px;font-size:10px;color:#f2f2f2">70</div>
</div>
<div class="a" style="left:1004px;top:639px;width:20px;height:76px;background:#262626"></div>
<svg style="left:1009px;top:642px" width="9" height="7"><path d="M4.5 0L9 7H0Z" fill="#9a9a9a"/></svg>
<div class="a" style="left:1005px;top:650px;width:18px;height:65px;background:linear-gradient(90deg,#333,#3c3c3c 50%,#353535);border-radius:6px"></div>
<div class="a" style="left:1005px;top:683px;width:18px;height:24px;background:#6b6b6b;border-radius:5px"></div>
</body></html>
